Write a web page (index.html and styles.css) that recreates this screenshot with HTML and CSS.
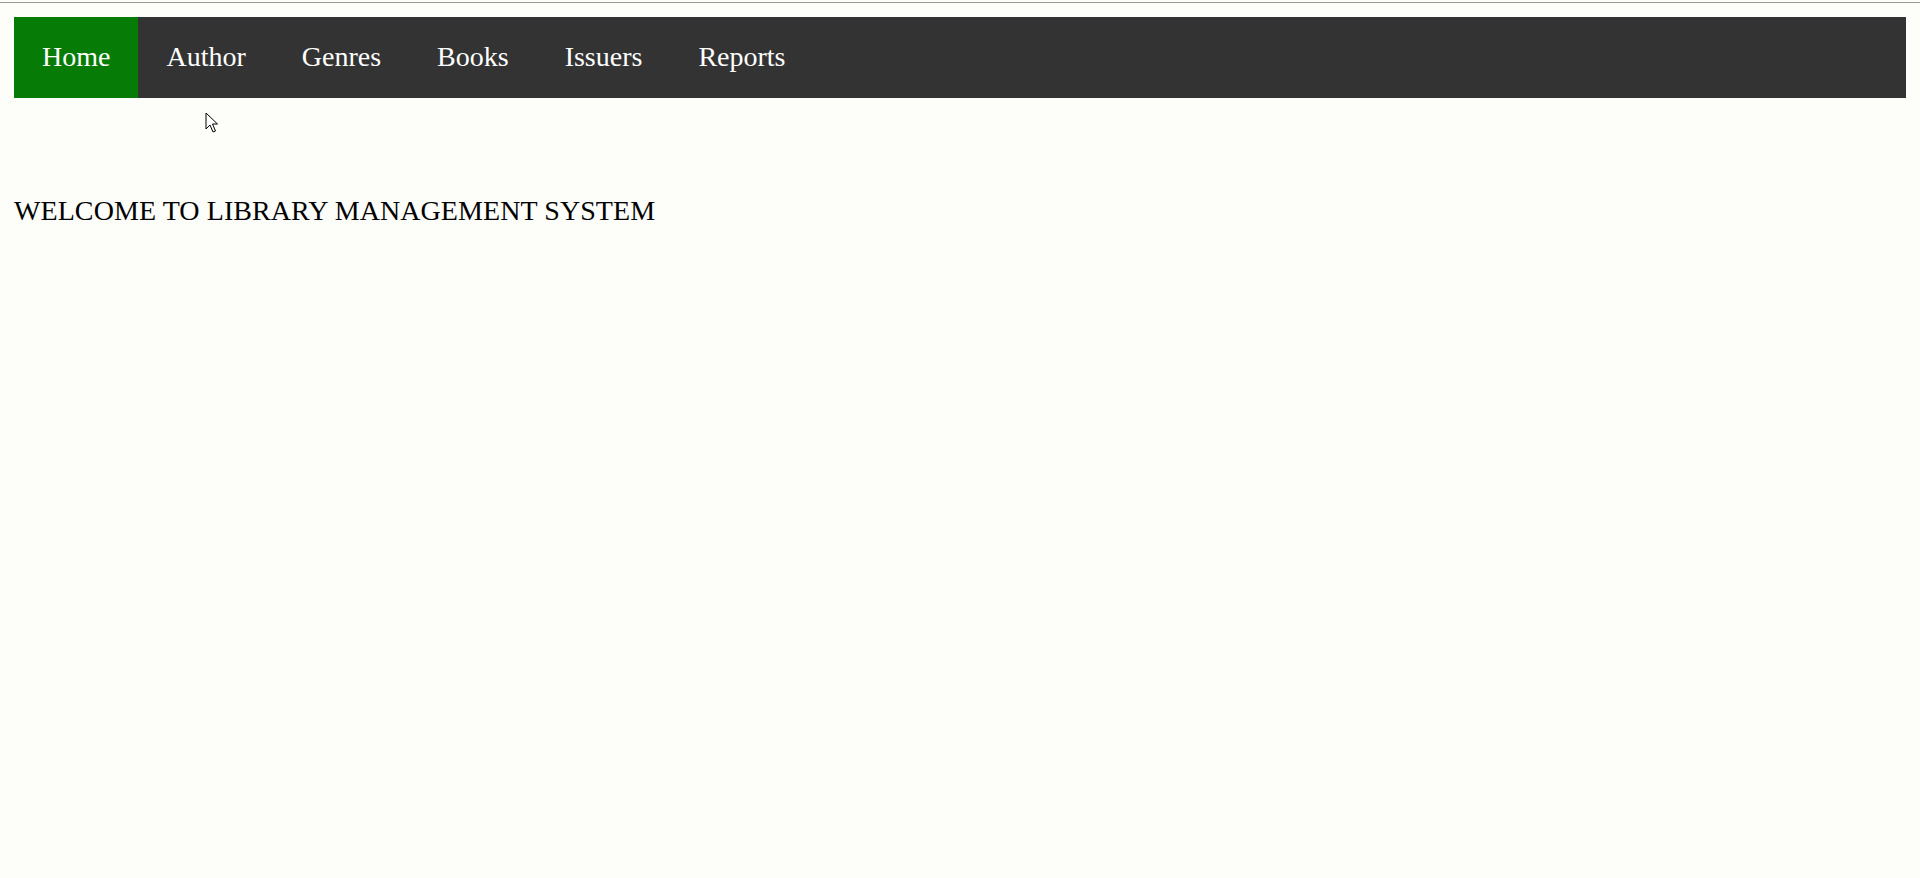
FILE: index.html
```html
<!DOCTYPE html>
<html>
<head>
<meta charset="utf-8">
<title>Library Management System</title>
<link rel="stylesheet" href="styles.css">
</head>
<body>
<div class="topline"></div>
<div class="page">
  <nav class="nav">
    <a class="nav-item active" href="#">Home</a>
    <a class="nav-item" href="#">Author</a>
    <a class="nav-item" href="#">Genres</a>
    <a class="nav-item" href="#">Books</a>
    <a class="nav-item" href="#">Issuers</a>
    <a class="nav-item" href="#">Reports</a>
  </nav>
  <p class="welcome">WELCOME TO LIBRARY MANAGEMENT SYSTEM</p>
</div>
<svg class="cursor" width="14" height="22" viewBox="0 0 14 22">
  <path d="M1 1 L1 17 L5 13 L8 20 L10.5 19 L7.5 12 L12.5 12 Z" fill="#fff" stroke="#000" stroke-width="1" stroke-linejoin="miter"/>
</svg>
</body>
</html>
```
FILE: styles.css
```css
html, body {
  margin: 0;
  padding: 0;
  background: #fdfdfa;
  font-family: "Liberation Serif", "Times New Roman", serif;
}
.topline {
  margin-top: 2px;
  height: 1px;
  background: #9a9a9a;
}
.page {
  padding: 14px;
}
.nav {
  display: flex;
  height: 81px;
  background: #333333;
}
.nav-item {
  display: block;
  padding: 24px 28px 25px;
  font-size: 28px;
  line-height: 32px;
  color: #ffffff;
  text-decoration: none;
}
.nav-item.active {
  background: #067c06;
}
.welcome {
  margin: 97px 0 0;
  font-size: 28px;
  letter-spacing: 0.08px;
  color: #000;
}
.cursor {
  position: absolute;
  left: 205px;
  top: 112px;
}
```
